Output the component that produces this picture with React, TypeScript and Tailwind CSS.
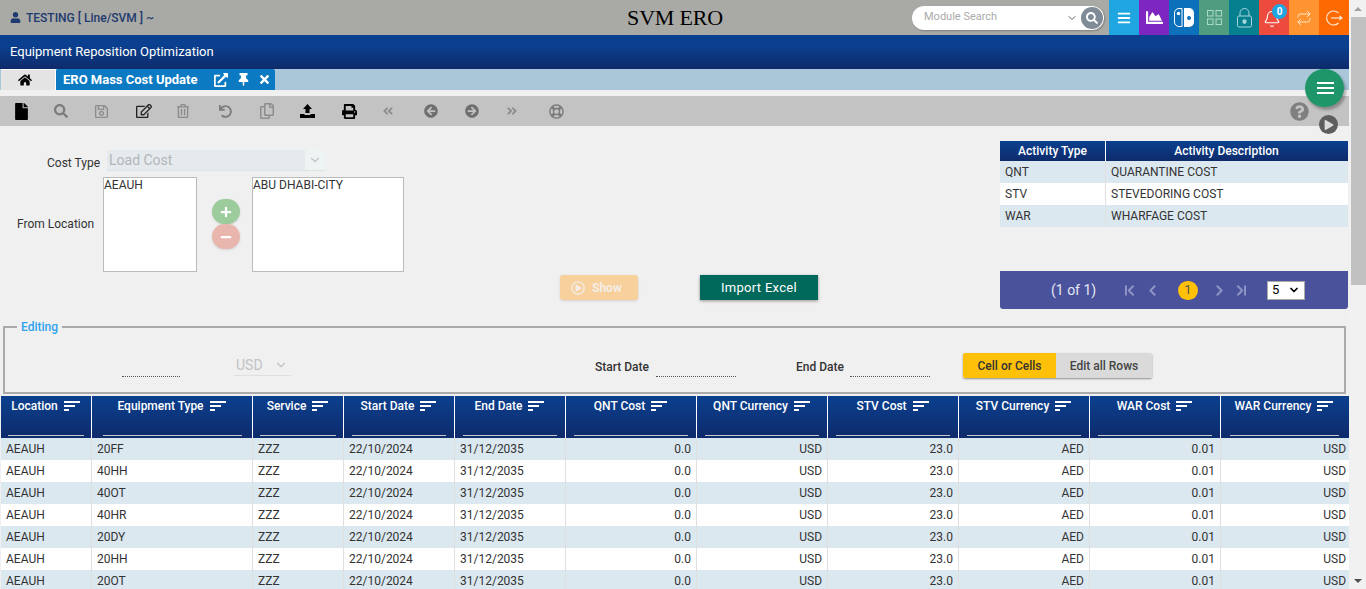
import { Bell, Repeat, ChevronDown, ChevronLeft, ChevronRight, ChevronFirst, ChevronLast } from "lucide-react";
import {
  FaUser, FaHome, FaExternalLinkAlt, FaThumbtack, FaTimes, FaFile, FaSearch, FaRegSave, FaRegEdit,
  FaRegTrashAlt, FaUndo, FaRegCopy, FaPrint, FaAngleDoubleLeft, FaAngleDoubleRight, FaArrowCircleLeft,
  FaArrowCircleRight, FaRegLifeRing, FaQuestionCircle, FaChartArea, FaPlus, FaMinus, FaRegPlayCircle, FaPlay, FaBars,
} from "react-icons/fa";

const GRID = "grid grid-cols-[91px_161px_91px_111px_111px_131px_131px_131px_131px_131px_127px]";

const columns = [
  { label: "Location", filter: "mx-[7px]" },
  { label: "Equipment Type", filter: "ml-[11px] mr-[10px]" },
  { label: "Service", filter: "mx-[7px]" },
  { label: "Start Date", filter: "mx-[8px]" },
  { label: "End Date", filter: "mx-[8px]" },
  { label: "QNT Cost", filter: "mx-[8px]" },
  { label: "QNT Currency", filter: "mx-[8px]" },
  { label: "STV Cost", filter: "mx-[8px]" },
  { label: "STV Currency", filter: "mx-[8px]" },
  { label: "WAR Cost", filter: "mx-[8px]" },
  { label: "WAR Currency", filter: "mx-[9px]" },
];

const rows = ["20FF", "40HH", "40OT", "40HR", "20DY", "20HH", "20OT"];

function SortIcon() {
  return (
    <svg width="16" height="11" viewBox="0 0 16 11" className="ml-[6px] shrink-0" fill="#fff">
      <rect x="0" y="0" width="16" height="2" />
      <rect x="0" y="4" width="11" height="2" />
      <rect x="0" y="8" width="5" height="2" />
    </svg>
  );
}

function SwitchIcon() {
  return (
    <svg width="20" height="19" viewBox="0 0 20 19">
      <path d="M8 .5H5A4.5 4.5 0 0 0 .5 5v9A4.5 4.5 0 0 0 5 18.500h3z" fill="none" stroke="#fff" strokeWidth="1" />
      <path d="M10 0h5a5 5 0 0 1 5 5v9a5 5 0 0 1-5 5h-5z" fill="#fff" />
      <circle cx="4.500" cy="5.500" r="1.700" fill="#fff" />
      <circle cx="15" cy="10" r="2" fill="#0d70bb" />
    </svg>
  );
}

function GridIcon() {
  return (
    <svg width="15" height="15" viewBox="0 0 15 15" fill="none" stroke="#a9dcc8" strokeWidth="1">
      <rect x="0.500" y="0.500" width="5.500" height="5.500" />
      <rect x="9" y="0.500" width="5.500" height="5.500" />
      <rect x="0.500" y="9" width="5.500" height="5.500" />
      <rect x="9" y="9" width="5.500" height="5.500" />
    </svg>
  );
}

function LockIcon() {
  return (
    <svg width="15" height="20" viewBox="0 0 15 20" fill="none" stroke="#a5d6dc" strokeWidth="1">
      <path d="M3 8V5a4.500 4.500 0 0 1 9 0v3" />
      <rect x="0.500" y="8" width="14" height="11" rx="1.500" />
      <path d="M6 12h3v2.500H6z" fill="#a5d6dc" />
      <path d="M6 14.500h3L7.500 16z" fill="#a5d6dc" />
    </svg>
  );
}

function ExitIcon() {
  return (
    <svg width="18" height="18" viewBox="0 0 18 18" fill="none" stroke="#ffe3cc" strokeWidth="1.200">
      <path d="M13.500 4A7 7 0 1 0 13.500 14" />
      <path d="M6 9h11" />
      <path d="M15 7.500 17 9l-2 1.500z" fill="#ffe3cc" />
    </svg>
  );
}

function Tile({ bg, children }: { bg: string; children: React.ReactNode }) {
  return <div className={`relative flex h-[35px] w-[30px] items-center justify-center ${bg}`}>{children}</div>;
}

export default function App() {
  return (
    <div className="relative flex h-[589px] w-[1366px] overflow-hidden bg-[#f0f0f0] font-['Roboto',sans-serif] text-[12px] text-[#333]">
      <div className="w-[1349px] shrink-0">
        {/* top bar */}
        <div className="flex h-[35px] items-center bg-[#a9aaa6]">
          <div className="flex w-[627px] items-center pl-[10px] text-[12px] font-medium text-[#1f3a70]">
            <FaUser className="mr-[5px] text-[11px]" />
            TESTING [ Line/SVM ] ~
          </div>
          <div className="w-[96px] whitespace-nowrap text-center font-['Liberation_Serif',serif] text-[22px] leading-none tracking-[-0.2px] text-black">SVM ERO</div>
          <div className="ml-[189px] flex h-[24px] w-[192px] items-center rounded-full bg-white pl-[12px] text-[11px] text-[#aaa] shadow-[1px_1px_2px_rgba(0,0,0,0.25)]">
            Module Search
            <ChevronDown size={12} className="ml-auto mr-[3px] text-[#666]" />
            <div className="mr-[1px] flex h-[22px] w-[22px] items-center justify-center rounded-full bg-[#7f8b96] text-[12px] text-white">
              <FaSearch />
            </div>
          </div>
          <div className="ml-[5px] flex">
            <Tile bg="bg-[#1fa6e0]"><FaBars className="text-[14px] text-white" /></Tile>
            <Tile bg="bg-[#7d26c0]"><FaChartArea className="text-[17px] text-white" /></Tile>
            <Tile bg="bg-[#0d70bb]"><SwitchIcon /></Tile>
            <Tile bg="bg-[#509c80]"><GridIcon /></Tile>
            <Tile bg="bg-[#067f8e]"><LockIcon /></Tile>
            <Tile bg="bg-[#ec4b3d]">
              <Bell size={18} strokeWidth={1.500} className="mt-[3px] -ml-[5px] text-white" />
              <span className="absolute left-[13px] top-[4px] flex h-[15px] w-[15px] items-center justify-center rounded-full bg-[#1fa6e0] text-[10px] font-bold text-white">0</span>
            </Tile>
            <Tile bg="bg-[#ff9430]"><Repeat size={16} strokeWidth={1.300} className="text-[#fff2e0]" /></Tile>
            <Tile bg="bg-[#ff6a00]"><ExitIcon /></Tile>
          </div>
        </div>

        {/* app title */}
        <div className="flex h-[34px] items-center bg-gradient-to-b from-[#0a408f] from-30% to-[#0e2b6b] pl-[10px] text-[13px] text-white">
          Equipment Reposition Optimization
        </div>

        {/* tabs */}
        <div className="flex h-[21px] bg-[#a9c7d9] pl-[1px]">
          <div className="flex w-[55px] items-center justify-center border-r border-t border-white bg-[#e4e4e4] pr-[6px] text-black">
            <FaHome className="text-[14px]" />
          </div>
          <div className="flex w-[219px] items-center rounded-t-[2px] bg-[#0b7ac2] pl-[7px] text-[13px] font-bold text-white">
            ERO Mass Cost Update
            <FaExternalLinkAlt className="ml-[16px] text-[14px]" />
            <FaThumbtack className="ml-[9px] text-[13px]" />
            <FaTimes className="ml-[8px] text-[13px]" />
          </div>
        </div>

        {/* toolbar */}
        <div className="mt-[6px] flex h-[30px] items-center bg-[#c3c3c3] pl-[13px] text-[14px]">
          <span className="flex w-[41px]"><FaFile className="text-[17px] text-black" /></span>
          <span className="flex w-[41px] text-[#7c7c7c]"><FaSearch /></span>
          <span className="flex w-[41px] text-[#8e8e8e]"><FaRegSave className="-ml-[1px] text-[15px]" /></span>
          <span className="flex w-[41px] text-[#222]"><FaRegEdit className="text-[16px]" /></span>
          <span className="flex w-[41px] text-[#8a8a8a]"><FaRegTrashAlt className="-ml-[1px]" /></span>
          <span className="flex w-[41px] text-[#7c7c7c]"><FaUndo className="ml-[1px] text-[13px]" /></span>
          <span className="flex w-[41px] text-[#8e8e8e]"><FaRegCopy className="text-[16px]" /></span>
          <span className="flex w-[41px] text-black">
            <svg width="15" height="14" viewBox="0 0 15 14" fill="currentColor">
              <path d="M7.500 0 12 5H9.500v4h-4V5H3z" />
              <path d="M0 10h4.500v1h6v-1H15v4H0z" />
            </svg>
          </span>
          <span className="flex w-[41px] text-black"><FaPrint className="ml-[1px] text-[15px]" /></span>
          <span className="flex w-[41px] text-[#8e8e8e]"><FaAngleDoubleLeft className="text-[12px]" /></span>
          <span className="flex w-[41px] text-[#6f6f6f]"><FaArrowCircleLeft className="ml-[1px]" /></span>
          <span className="flex w-[41px] text-[#6f6f6f]"><FaArrowCircleRight className="ml-[1px]" /></span>
          <span className="flex w-[41px] text-[#8e8e8e]"><FaAngleDoubleRight className="ml-[1px] text-[12px]" /></span>
          <span className="flex text-[#7c7c7c]"><FaRegLifeRing className="ml-[3px] text-[15px]" /></span>
        </div>

        {/* form + activity table */}
        <div className="flex h-[200px]">
          <div className="w-[1000px] shrink-0 pt-[24px]">
            <div className="flex h-[21px]">
              <span className="ml-[47px] mt-[4px] w-[60px]">Cost Type</span>
              <div className="flex w-[218px] border-b border-[#dfe3e6] bg-[#e4eaee] text-[14px] text-[#b2b6b8]">
                <span className="flex-1 pl-[2px] leading-[20px]">Load Cost</span>
                <span className="flex w-[20px] items-center justify-center bg-[#eef3f3]"><ChevronDown size={14} className="text-[#c0c4c6]" /></span>
              </div>
            </div>
            <div className="mt-[6px] flex h-[95px]">
              <span className="ml-[17px] mt-[38px] w-[86px]">From Location</span>
              <div className="w-[94px] border border-[#bbb] bg-white leading-[15px]">AEAUH</div>
              <div className="ml-[15px] mt-[22px] flex flex-col">
                <div className="flex h-[25px] w-[28px] items-center justify-center rounded-full bg-[#9ccb9c] text-[12px] text-white shadow-sm"><FaPlus /></div>
                <div className="flex h-[25px] w-[28px] items-center justify-center rounded-full bg-[#e9b6ae] text-[12px] text-white shadow-sm"><FaMinus /></div>
              </div>
              <div className="ml-[12px] w-[152px] border border-[#bbb] bg-white leading-[15px]">ABU DHABI-CITY</div>
            </div>
            <div className="mt-[3px] flex">
              <div className="ml-[560px] flex h-[25px] w-[78px] items-center rounded-[3px] bg-[#f7d09c] pl-[11px] font-bold text-[#f3ede6] shadow-sm">
                <FaRegPlayCircle className="mr-[7px] text-[14px]" />
                Show
              </div>
              <div className="ml-[62px] flex h-[25px] w-[118px] items-center justify-center bg-[#00695c] text-[13px] tracking-[0.3px] text-white shadow-[0_1px_3px_rgba(0,0,0,0.4)]">
                Import Excel
              </div>
            </div>
          </div>

          <div className="w-[348px] shrink-0 pt-[15px]">
            <div className="grid h-[20px] grid-cols-[106px_241px] bg-gradient-to-b from-[#0a408f] to-[#0e2b6b] text-center font-medium leading-[20px] text-white">
              <div className="border-r border-white">Activity Type</div>
              <div>Activity Description</div>
            </div>
            {[
              ["QNT", "QUARANTINE COST", "bg-[#dbe8f0]"],
              ["STV", "STEVEDORING COST", "bg-white"],
              ["WAR", "WHARFAGE COST", "bg-[#dbe8f0]"],
            ].map(([code, desc, bg]) => (
              <div key={code} className={`grid h-[22px] grid-cols-[106px_241px] leading-[22px] ${bg}`}>
                <div className="border-r border-[#e0e0e0] pl-[5px]">{code}</div>
                <div className="pl-[5px]">{desc}</div>
              </div>
            ))}
            <div className="mt-[44px] flex h-[38px] items-center rounded-b-[3px] bg-[#4a529c] text-white">
              <span className="ml-[51px] w-[70px] text-[14px] text-[#e6e8f5]">(1 of 1)</span>
              <ChevronFirst size={17} strokeWidth={2.800} className="text-[#8f94c4]" />
              <ChevronLeft size={17} strokeWidth={2.800} className="ml-[6px] text-[#8f94c4]" />
              <span className="ml-[17px] flex h-[19px] w-[20px] items-center justify-center rounded-full bg-[#ffc107] text-[13px] text-[#555]">1</span>
              <ChevronRight size={17} strokeWidth={2.800} className="ml-[13px] text-[#8f94c4]" />
              <ChevronLast size={17} strokeWidth={2.800} className="ml-[5px] text-[#8f94c4]" />
              <span className="ml-[17px] flex h-[19px] w-[38px] items-center justify-between border border-[#aaa] bg-white pl-[4px] pr-[4px] text-[13px] text-black">
                5
                <ChevronDown size={12} strokeWidth={3.500} />
              </span>
            </div>
          </div>
        </div>

        {/* editing */}
        <fieldset className="ml-[3px] h-[68px] w-[1343px] border-2 border-[#aaa]">
          <legend className="ml-[12px] px-[4px] text-[12px] font-medium leading-[2px] text-[#2fa3ee]">Editing</legend>
          <div className="flex">
            <span className="ml-[117px] mt-[48px] h-0 w-[58px] border-b border-dotted border-[#555]" />
            <div className="ml-[54px] mt-[27px] flex h-[21px] w-[57px] items-center justify-between border-b border-[#dfdfdf] pl-[2px] pr-[3px] text-[14px] text-[#c2c2c2]">
              USD
              <ChevronDown size={14} />
            </div>
            <span className="ml-[304px] mt-[30px] w-[54px] whitespace-nowrap font-medium">Start Date</span>
            <span className="ml-[7px] mt-[48px] h-0 w-[80px] border-b border-dotted border-[#555]" />
            <span className="ml-[60px] mt-[30px] w-[47px] whitespace-nowrap font-medium">End Date</span>
            <span className="ml-[7px] mt-[48px] h-0 w-[80px] border-b border-dotted border-[#555]" />
            <div className="ml-[33px] mt-[25px] flex h-[25px] w-[189px] overflow-hidden rounded-[2px] font-medium shadow-[0_1px_2px_rgba(0,0,0,0.4)]">
              <span className="flex w-[93px] items-center justify-center bg-[#ffc107] text-[#333]">Cell or Cells</span>
              <span className="flex w-[96px] items-center justify-center bg-[#dadada] text-[#444]">Edit all Rows</span>
            </div>
          </div>
        </fieldset>

        {/* data grid */}
        <div className={`${GRID} ml-[1px] mt-[2px] h-[42px] bg-gradient-to-b from-[#0a408f] to-[#0e2b6b] text-white`}>
          {columns.map((c) => (
            <div key={c.label} className="flex flex-col border-r border-white last:border-r-0">
              <div className="flex h-[20px] items-center justify-center pr-[1px] font-medium">
                {c.label}
                <SortIcon />
              </div>
              <div className={`mt-[19px] h-px bg-[#c9c9c9] ${c.filter}`} />
            </div>
          ))}
        </div>
        {rows.map((eq, i) => (
          <div key={eq} className={`${GRID} ml-[1px] h-[22px] leading-[22px] ${i % 2 === 0 ? "bg-[#dbe8f0]" : "bg-white"}`}>
            <div className="border-r border-[#dfdfdf] pl-[5px]">AEAUH</div>
            <div className="border-r border-[#dfdfdf] pl-[5px]">{eq}</div>
            <div className="border-r border-[#dfdfdf] pl-[5px]">ZZZ</div>
            <div className="border-r border-[#dfdfdf] pl-[5px]">22/10/2024</div>
            <div className="border-r border-[#dfdfdf] pl-[5px]">31/12/2035</div>
            <div className="border-r border-[#dfdfdf] pr-[5px] text-right">0.0</div>
            <div className="border-r border-[#dfdfdf] pr-[5px] text-right">USD</div>
            <div className="border-r border-[#dfdfdf] pr-[5px] text-right">23.0</div>
            <div className="border-r border-[#dfdfdf] pr-[5px] text-right">AED</div>
            <div className="border-r border-[#dfdfdf] pr-[5px] text-right">0.01</div>
            <div className="pr-[2px] text-right">USD</div>
          </div>
        ))}
      </div>

      {/* page scrollbar */}
      <div className="flex w-[17px] shrink-0 flex-col bg-[#f1f1f1]">
        <div className="flex h-[17px] items-center justify-center">
          <span className="h-0 w-0 border-x-[4px] border-b-[4px] border-x-transparent border-b-[#a3a3a3]" />
        </div>
        <div className="ml-[2px] h-[268px] w-[15px] bg-[#c1c1c1]" />
        <div className="mt-auto flex h-[17px] items-center justify-center">
          <span className="h-0 w-0 border-x-[4px] border-t-[4px] border-x-transparent border-t-[#505050]" />
        </div>
      </div>

      {/* floating buttons */}
      <div className="absolute left-[1305px] top-[69px] flex h-[38px] w-[39px] flex-col items-center justify-center gap-[3px] rounded-full bg-[#1e9669] pl-[2px] shadow-[2px_3px_3px_rgba(0,0,0,0.3)]">
        <span className="h-[2px] w-[17px] bg-white" />
        <span className="h-[2px] w-[17px] bg-white" />
        <span className="h-[2px] w-[17px] bg-white" />
      </div>
      <FaQuestionCircle className="absolute left-[1290px] top-[102px] text-[19px] text-[#808080]" />
      <div className="absolute left-[1319px] top-[115px] flex h-[19px] w-[19px] items-center justify-center rounded-full bg-[#5e5e5e] text-[10px] text-[#dcdcdc]">
        <FaPlay className="ml-[1px]" />
      </div>
    </div>
  );
}
